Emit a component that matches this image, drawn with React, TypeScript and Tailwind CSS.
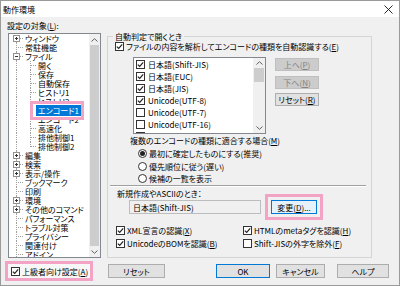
import React from 'react';

type Row = { t: string; l: 0 | 1; box?: '+' | '-'; sel?: boolean; last?: boolean; first?: boolean };

const TREE: Row[] = [
  { t: 'ウィンドウ', l: 0, box: '+', first: true },
  { t: '常駐機能', l: 0 },
  { t: 'ファイル', l: 0, box: '-' },
  { t: '開く', l: 1 },
  { t: '保存', l: 1 },
  { t: '自動保存', l: 1 },
  { t: 'ヒストリ1', l: 1 },
  { t: 'ヒストリ2', l: 1 },
  { t: 'エンコード1', l: 1, sel: true },
  { t: 'エンコード2', l: 1 },
  { t: '高速化', l: 1 },
  { t: '排他制御1', l: 1 },
  { t: '排他制御2', l: 1, last: true },
  { t: '編集', l: 0, box: '+' },
  { t: '検索', l: 0, box: '+' },
  { t: '表示/操作', l: 0, box: '+' },
  { t: 'ブックマーク', l: 0 },
  { t: '印刷', l: 0 },
  { t: '環境', l: 0, box: '+' },
  { t: 'その他のコマンド', l: 0, box: '+' },
  { t: 'パフォーマンス', l: 0 },
  { t: 'トラブル対策', l: 0 },
  { t: 'プライバシー', l: 0 },
  { t: '関連付け', l: 0 },
  { t: 'アドイン', l: 0 },
];

const ENCODINGS = [
  { t: '日本語(Shift-JIS)', on: true },
  { t: '日本語(EUC)', on: true },
  { t: '日本語(JIS)', on: true },
  { t: 'Unicode(UTF-8)', on: true },
  { t: 'Unicode(UTF-7)', on: false },
  { t: 'Unicode(UTF-16)', on: false },
  { t: '', on: false },
];

function Connector({ row }: { row: Row }) {
  const w = row.l === 0 ? 14 : 27;
  return (
    <svg width={w} height={9} className="shrink-0" shapeRendering="crispEdges">
      <g stroke="#a0a0a0" strokeDasharray="1 1">
        <line x1={7.5} y1={row.first ? 4 : 0} x2={7.5} y2={9} />
        {row.l === 0 && <line x1={9} y1={4.5} x2={14} y2={4.5} />}
        {row.l === 1 && <line x1={21.5} y1={0} x2={21.5} y2={row.last ? 5 : 9} />}
        {row.l === 1 && <line x1={22} y1={4.5} x2={27} y2={4.5} />}
      </g>
      {row.box && (
        <g>
          <rect x={4.5} y={1.5} width={6} height={6} fill="#fff" stroke="#919191" />
          <line x1={6} y1={4.5} x2={9} y2={4.5} stroke="#333" />
          {row.box === '+' && <line x1={7.5} y1={3} x2={7.5} y2={6} stroke="#333" />}
        </g>
      )}
    </svg>
  );
}

function Arrow({ up }: { up?: boolean }) {
  return (
    <svg width="7" height="4" viewBox="0 0 7 4">
      <path d={up ? 'M0.5 3.5 L3.5 0.7 L6.5 3.5' : 'M0.5 0.5 L3.5 3.3 L6.5 0.5'} stroke="#606060" strokeWidth="1" fill="none" />
    </svg>
  );
}

function Check({ on }: { on?: boolean }) {
  return (
    <span className="w-[9px] h-[9px] border border-[#333333] bg-white flex items-center justify-center shrink-0">
      {on && (
        <svg width="7" height="7" viewBox="0 0 7 7">
          <path d="M0.8 3.6 L2.7 5.4 L6.2 1.4" stroke="#222" strokeWidth="1.2" fill="none" />
        </svg>
      )}
    </span>
  );
}

function Radio({ on }: { on?: boolean }) {
  return (
    <span className="w-[9px] h-[9px] rounded-full border border-[#333333] bg-white flex items-center justify-center shrink-0">
      {on && <span className="w-[5px] h-[5px] rounded-full bg-[#222]" />}
    </span>
  );
}

function Btn({ children, className = '', disabled, primary }: { children: React.ReactNode; className?: string; disabled?: boolean; primary?: boolean }) {
  const look = disabled
    ? 'border-[#bfbfbf] bg-[#cccccc] text-[#838383]'
    : primary
      ? 'border-[#0078d7] bg-[#e1e1e1]'
      : 'border-[#adadad] bg-[#e1e1e1]';
  return <div className={`border flex items-center justify-center shrink-0 ${look} ${className}`}>{children}</div>;
}

function Tree() {
  return (
    <div className="ml-[3px] w-[93px] h-[225px] border border-[#828790] bg-white flex overflow-hidden">
      <div className="flex-1 flex flex-col">
        {TREE.map((r) => (
          <div key={r.t} className="h-[9px] flex items-center shrink-0 whitespace-nowrap">
            <Connector row={r} />
            {r.sel ? (
              <span className="relative">
                <span className="absolute -left-[6px] -right-[3px] -top-[5px] -bottom-[5px] border-[3px] border-[#f3a4c4] bg-white z-10" />
                <span className="relative z-20 px-[2px] bg-[#0078d7] text-white">{r.t}</span>
              </span>
            ) : (
              <span className="px-[2px]">{r.t}</span>
            )}
          </div>
        ))}
      </div>
      <div className="w-[11px] bg-[#f0f0f0] flex flex-col shrink-0">
        <div className="h-[11px] flex items-center justify-center"><Arrow up /></div>
        <div className="flex-1 mx-[1px] bg-[#cdcdcd]" />
        <div className="h-[11px] flex items-center justify-center"><Arrow /></div>
      </div>
    </div>
  );
}

export default function App() {
  return (
    <div className="w-[400px] h-[286px] border border-[#9a9a9a] bg-[#f0f0f0] flex flex-col text-[8px] leading-[9px] text-black font-['Noto_Sans_CJK_JP',sans-serif] [font-feature-settings:'palt'] overflow-hidden">
      <div className="h-[16px] bg-white flex items-center justify-between pl-[2px] pr-[6px] shrink-0">
        <span>動作環境</span>
        <svg width="9" height="9" viewBox="0 0 9 9">
          <path d="M0.5 0.5 L8.5 8.5 M8.5 0.5 L0.5 8.5" stroke="#111" strokeWidth="0.9" />
        </svg>
      </div>

      <div className="flex flex-1">
        <div className="w-[103px] flex flex-col pl-[4px] shrink-0">
          <div className="h-[16px] flex items-center pl-[2px]">設定の対象(<u>L</u>):</div>
          <Tree />
          <div className="mt-[3px] w-[88px] h-[20px] border-[3px] border-[#f3a4c4] bg-[#f7f7f7] flex items-center pl-[3px] gap-[2px]">
            <Check on />
            <span>上級者向け設定(<u>A</u>)</span>
          </div>
        </div>

        <div className="flex-1 flex flex-col">
          <fieldset className="ml-[3px] mt-[15px] w-[265px] h-[226px] border border-[#d5d5d5] flex flex-col">
            <legend className="ml-[5px] px-[2px] leading-[9px]">自動判定で開くとき</legend>
            <div className="mt-[1px] h-[9px] flex items-center pl-[7px] gap-[2px] whitespace-nowrap">
              <Check on />
              <span>ファイルの内容を解析してエンコードの種類を自動認識する(<u>E</u>)</span>
            </div>

            <div className="mt-[6px] flex">
              <div className="ml-[25px] w-[133px] h-[77px] border border-[#828790] bg-white flex overflow-hidden">
                <div className="flex-1 flex flex-col">
                  {ENCODINGS.map((e, i) => (
                    <div key={i} className="h-[12px] flex items-center pl-[2px] gap-[3px] shrink-0">
                      <Check on={e.on} />
                      <span>{e.t}</span>
                    </div>
                  ))}
                </div>
                <div className="w-[12px] bg-[#f0f0f0] flex flex-col shrink-0">
                  <div className="h-[10px] flex items-center justify-center"><Arrow up /></div>
                  <div className="h-[14px] mx-[1px] bg-[#cdcdcd]" />
                  <div className="flex-1" />
                  <div className="h-[11px] flex items-center justify-center"><Arrow /></div>
                </div>
              </div>
              <div className="ml-[9px] flex flex-col">
                <Btn disabled className="mt-[1px] w-[44px] h-[13px]">上へ(<u>P</u>)</Btn>
                <Btn disabled className="mt-[5px] w-[44px] h-[13px]">下へ(<u>N</u>)</Btn>
                <Btn className="mt-[4px] w-[44px] h-[13px]">リセット(<u>R</u>)</Btn>
              </div>
            </div>

            <div className="mt-[2px] ml-[22px] h-[9px] flex items-center">複数のエンコードの種類に適合する場合(<u>M</u>)</div>
            <div className="mt-[2px] ml-[30px] h-[12px] flex items-center gap-[2px]">
              <Radio on />
              <span>最初に確定したものにする(推奨)</span>
            </div>
            <div className="mt-[1px] ml-[30px] h-[12px] flex items-center gap-[2px]">
              <Radio />
              <span>優先順位に従う(遅い)</span>
            </div>
            <div className="ml-[30px] h-[12px] flex items-center gap-[2px]">
              <Radio />
              <span>候補の一覧を表示</span>
            </div>
            <div className="mt-[1px] ml-[2px] w-[256px] border-t border-t-[#a0a0a0] border-b border-b-white" />

            <div className="mt-[2px] ml-[9px] h-[9px] flex items-center">新規作成やASCIIのとき：</div>
            <div className="mt-[2px] flex items-center">
              <div className="ml-[21px] w-[132px] h-[14px] border border-[#bdbdbd] bg-[#f0f0f0] flex items-center pl-[3px]">日本語(Shift-JIS)</div>
              <div className="ml-[4px] -my-[6px] w-[58px] h-[26px] border-[3px] border-[#f3a4c4] flex items-center pl-[3px]">
                <div className="w-[46px] h-[14px] border border-[#0078d7] bg-[#e5f1fb] flex items-center justify-center">変更(<u>D</u>)...</div>
              </div>
            </div>

            <div className="mt-[10px] h-[13px] flex items-center pl-[8px]">
              <div className="w-[127px] flex items-center gap-[2px]"><Check on /><span>XML宣言の認識(<u>X</u>)</span></div>
              <div className="flex items-center gap-[2px]"><Check on /><span>HTMLのmetaタグを認識(<u>H</u>)</span></div>
            </div>
            <div className="h-[13px] flex items-center pl-[8px]">
              <div className="w-[127px] flex items-center gap-[2px]"><Check on /><span>UnicodeのBOMを認識(<u>B</u>)</span></div>
              <div className="flex items-center gap-[2px]"><Check /><span>Shift-JISの外字を除外(<u>F</u>)</span></div>
            </div>
          </fieldset>

          <div className="mt-[6px] flex">
            <Btn className="ml-[4px] w-[57px] h-[14px]">リセット</Btn>
            <Btn primary className="ml-[51px] w-[54px] h-[14px]">OK</Btn>
            <Btn className="ml-[6px] w-[49px] h-[14px]">キャンセル</Btn>
            <Btn className="ml-[12px] w-[52px] h-[14px]">ヘルプ</Btn>
          </div>
        </div>
      </div>
    </div>
  );
}
